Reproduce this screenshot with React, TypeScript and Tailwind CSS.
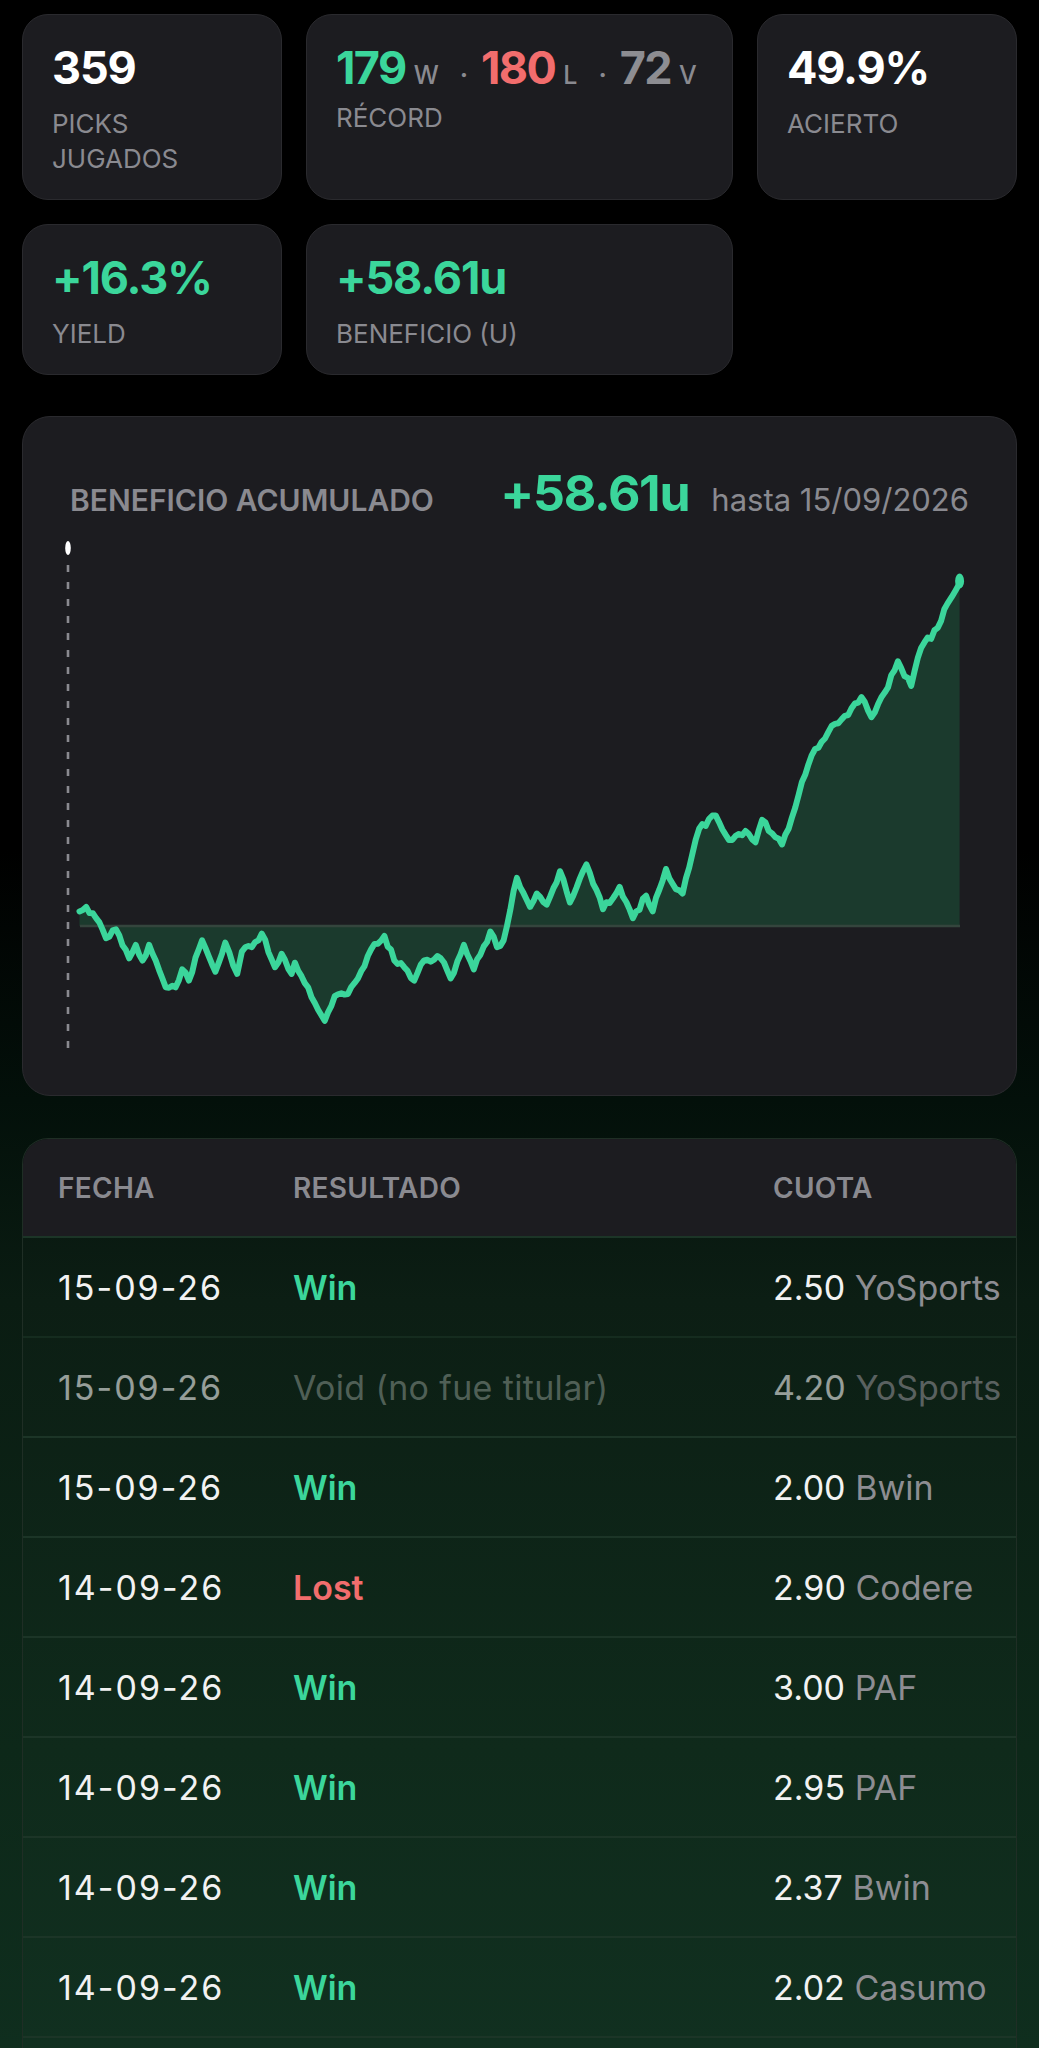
import React from "react";

type Pt = [number, number];

// key points of the cumulative profit curve (page coords)
const KEY: Pt[] = [
    [79.5, 913.4], [86.2, 908.9], [96.1, 920.1], [106.0, 940.2], [116.0, 931.3], [129.2, 960.3],
    [135.8, 946.9], [142.5, 962.5], [149.1, 946.9], [165.7, 989.3], [175.6, 989.3], [182.2, 971.4],
    [188.9, 982.6], [202.1, 942.4], [215.4, 973.7], [225.3, 944.6], [237.2, 975.9], [241.9, 953.6],
    [251.8, 949.1], [261.8, 935.7], [275.0, 969.2], [281.6, 955.8], [291.6, 975.9], [294.9, 964.7],
    [324.7, 1022.8], [334.7, 998.2], [347.9, 996.0], [357.9, 980.4], [371.1, 951.3], [384.4, 937.9],
    [394.3, 962.5], [404.2, 969.2], [414.2, 982.6], [424.1, 962.5], [440.7, 960.3], [450.6, 980.4],
    [463.9, 946.9], [473.8, 971.4], [490.4, 933.5], [497.0, 949.1], [503.6, 942.4], [516.9, 879.9],
    [530.1, 908.9], [536.8, 895.5], [546.7, 906.7], [560.0, 873.2], [569.9, 904.5], [586.5, 866.5],
    [603.0, 911.2], [619.6, 888.8], [632.9, 920.1], [646.1, 897.8], [652.7, 913.4], [666.0, 871.0],
    [675.9, 891.1], [682.6, 895.5], [699.1, 830.8], [715.7, 817.4], [729.0, 842.0], [745.5, 833.0],
    [755.5, 844.2], [762.1, 821.9], [772.0, 835.3], [782.0, 846.4], [791.9, 819.6], [801.9, 783.9],
    [811.8, 757.1], [821.7, 743.8], [835.0, 725.9], [848.2, 717.0], [861.5, 699.1], [871.4, 719.2],
    [884.7, 694.6], [897.9, 663.4], [911.2, 687.9], [921.1, 650.0], [937.7, 629.9], [947.6, 605.4],
    [959.6, 585.3],
];

const ZERO_Y = 928;

function buildLine(): Pt[] {
    let seed = 11;
    const rand = () => {
        seed = (seed * 9301 + 49297) % 233280;
        return seed / 233280;
    };
    const out: Pt[] = [];
    for (let i = 0; i < KEY.length - 1; i++) {
        const [ax, ay] = KEY[i];
        const [bx, by] = KEY[i + 1];
        const n = Math.max(1, Math.round((bx - ax) / 3.5));
        for (let j = 0; j < n; j++) {
            const t = j / n;
            const jitter = j === 0 ? 0 : (rand() - 0.5) * 6;
            out.push([ax + (bx - ax) * t, ay + (by - ay) * t + jitter]);
        }
    }
    out.push(KEY[KEY.length - 1]);
    return out;
}

const LINE = buildLine();
const LINE_D = LINE.map((p, i) => `${i === 0 ? "M" : "L"}${p[0].toFixed(1)} ${p[1].toFixed(1)}`).join(" ");
const AREA_D = `${LINE_D} L${LINE[LINE.length - 1][0]} ${ZERO_Y} L${LINE[0][0]} ${ZERO_Y} Z`;

interface Row {
    date: string;
    result: "Win" | "Lost" | "Void";
    label: string;
    odds: string;
    book: string;
}

const ROWS: Row[] = [
    { date: "15-09-26", result: "Win", label: "Win", odds: "2.50", book: "YoSports" },
    { date: "15-09-26", result: "Void", label: "Void (no fue titular)", odds: "4.20", book: "YoSports" },
    { date: "15-09-26", result: "Win", label: "Win", odds: "2.00", book: "Bwin" },
    { date: "14-09-26", result: "Lost", label: "Lost", odds: "2.90", book: "Codere" },
    { date: "14-09-26", result: "Win", label: "Win", odds: "3.00", book: "PAF" },
    { date: "14-09-26", result: "Win", label: "Win", odds: "2.95", book: "PAF" },
    { date: "14-09-26", result: "Win", label: "Win", odds: "2.37", book: "Bwin" },
    { date: "14-09-26", result: "Win", label: "Win", odds: "2.02", book: "Casumo" },
];

function StatCard({ children, label, tight }: { children: React.ReactNode; label: React.ReactNode; tight?: boolean }) {
    return (
        <div className="rounded-[26px] border border-[#2a2a2e] bg-[#1c1c20] pl-[29px] pr-4 pt-[29px] pb-[23px]">
            <div className="flex h-[48px] items-baseline text-[45px] font-bold leading-[48px] tracking-tight">{children}</div>
            <div className={`${tight ? "mt-[8px]" : "mt-[14px]"} text-[26px] leading-[35px] text-[#8a8a90] uppercase`}>{label}</div>
        </div>
    );
}

function Suffix({ children }: { children: React.ReactNode }) {
    return <span className="ml-[8px] text-[25px] font-medium tracking-normal text-[#8a8a90]">{children}</span>;
}

function Dot() {
    return <span className="ml-[21px] mr-[14px] text-[25px] text-[#8a8a90]">·</span>;
}

export default function App() {
    return (
        <div className="min-h-[2048px] overflow-hidden bg-[linear-gradient(180deg,#000_0px,#000_850px,#03100a_1100px,#0a1c12_1300px,#0d2819_1750px,#0f2e1e_2048px)] font-['Inter','Noto_Sans',sans-serif] text-white">
            <div className="px-[22px] pt-[14px]">
                {/* Stats */}
                <div className="grid grid-cols-[260px_427px_260px] gap-6">
                    <StatCard label={<>PICKS<br />JUGADOS</>}>
                        <span className="text-white">359</span>
                    </StatCard>
                    <StatCard label="Récord" tight>
                        <span className="tracking-[-0.035em] text-[#3bd69b]">179</span>
                        <Suffix>W</Suffix>
                        <Dot />
                        <span className="tracking-[-0.035em] text-[#f26d6d]">180</span>
                        <Suffix>L</Suffix>
                        <Dot />
                        <span className="tracking-[-0.035em] text-[#8d8d92]">72</span>
                        <Suffix>V</Suffix>
                    </StatCard>
                    <StatCard label="Acierto">
                        <span className="text-white">49.9%</span>
                    </StatCard>
                    <StatCard label="Yield">
                        <span className="text-[#3bd69b]">+16.3%</span>
                    </StatCard>
                    <StatCard label="Beneficio (u)">
                        <span className="text-[#3bd69b]">+58.61u</span>
                    </StatCard>
                </div>

                {/* Chart */}
                <div className="mt-[41px] rounded-[28px] border border-[#2a2a2e] bg-[#1c1c20] pt-[50px] pb-[37px]">
                    <div className="flex h-[53px] items-baseline justify-between px-[47px]">
                        <span className="text-[30px] font-semibold text-[#8a8a90] uppercase">Beneficio acumulado</span>
                        <div className="flex items-baseline gap-[22px]">
                            <span className="text-[50px] font-bold leading-[53px] tracking-tight text-[#3bd69b]">+58.61u</span>
                            <span className="text-[31px] text-[#8a8a90]">hasta 15/09/2026</span>
                        </div>
                    </div>
                    <svg className="block" width={993} height={538} viewBox="23 522 993 538">
                        <line x1={68} y1={567} x2={68} y2={1052} stroke="#8a8a90" strokeWidth={2.6} strokeDasharray="7 10" />
                        <ellipse cx={68} cy={550} rx={2.8} ry={7} fill="#ffffff" />
                        <path d={AREA_D} fill="#1b3a2d" />
                        <line x1={80} y1={ZERO_Y} x2={960} y2={ZERO_Y} stroke="#34453d" strokeWidth={2.5} />
                        <path d={LINE_D} fill="none" stroke="#3bd69b" strokeWidth={6} strokeLinejoin="round" strokeLinecap="round" />
                        <ellipse cx={959.6} cy={583} rx={4.5} ry={7.5} fill="#3bd69b" />
                    </svg>
                </div>

                {/* Table */}
                <div className="mt-[42px] overflow-hidden rounded-t-[26px] border border-b-0 border-[#1f2e25] bg-white/[0.012]">
                    <div className="grid h-[97px] grid-cols-[235px_480px_1fr] items-center bg-[#1c1c20] pl-[35px] text-[28px] font-semibold tracking-[0.01em] text-[#8a8a90] uppercase">
                        <span>Fecha</span>
                        <span>Resultado</span>
                        <span>Cuota</span>
                    </div>
                    {ROWS.map((row, i) => {
                        const isVoid = row.result === "Void";
                        let resultClass = "font-semibold text-[#3bd69b]";
                        if (row.result === "Lost") resultClass = "font-semibold text-[#f26d6d]";
                        if (isVoid) resultClass = "text-[#7d8a82] tracking-[0.01em]";
                        return (
                            <div
                                key={i}
                                className={`grid h-[100px] grid-cols-[235px_480px_1fr] items-center border-t-2 border-[#1c3527] pl-[35px] text-[34px] whitespace-nowrap ${isVoid ? "opacity-60" : ""}`}
                            >
                                <span className="tracking-[2px] text-[#f2f2f2]">{row.date}</span>
                                <span className={resultClass}>{row.label}</span>
                                <span>
                                    <span className="text-[#f2f2f2]">{row.odds}</span>{" "}
                                    <span className="text-[#8d8d92]">{row.book}</span>
                                </span>
                            </div>
                        );
                    })}
                    <div className="h-[40px] border-t-2 border-[#1c3527]" />
                </div>
            </div>
        </div>
    );
}
